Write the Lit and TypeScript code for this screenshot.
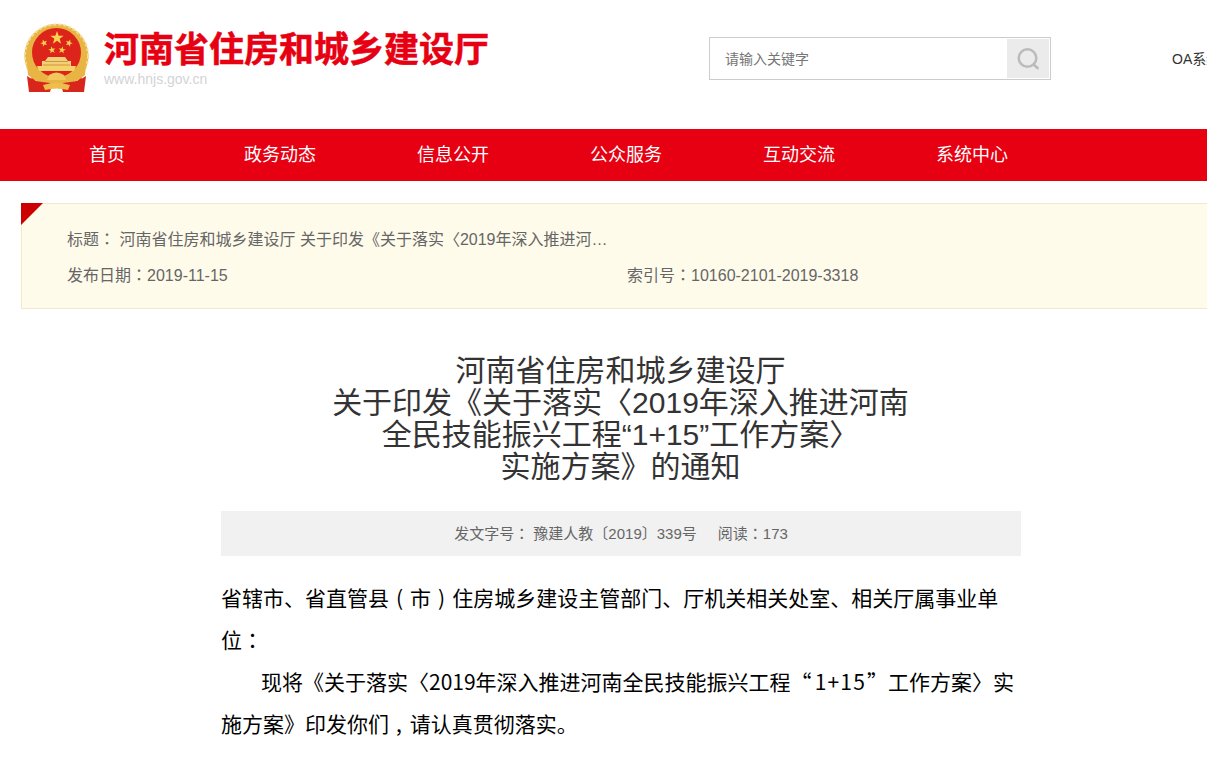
import { LitElement, html, css, svg } from "lit";
import { customElement } from "lit/decorators.js";

const NAV = ["首页", "政务动态", "信息公开", "公众服务", "互动交流", "系统中心"];

function star(cx: number, cy: number, r: number, rot = 0) {
  const pts: string[] = [];
  for (let i = 0; i < 10; i++) {
    const rad = i % 2 === 0 ? r : r * 0.4;
    const a = ((-90 + rot + i * 36) * Math.PI) / 180;
    pts.push(`${(cx + rad * Math.cos(a)).toFixed(2)},${(cy + rad * Math.sin(a)).toFixed(2)}`);
  }
  return svg`<polygon points=${pts.join(" ")} fill="#f7d34f" />`;
}

@customElement("app-root")
export class AppRoot extends LitElement {
  static styles = css`
    :host {
      display: block;
      width: 1207px;
      height: 765px;
      overflow: hidden;
      background: #fff;
      font-family: "Liberation Sans", "Noto Sans CJK SC", sans-serif;
      color: #333;
    }
    .tc { font-family: "Noto Sans CJK TC", sans-serif; }
    .paren { margin: 0 7px; }
    .comma { margin: 0 8px 0 7px; }
    .num { letter-spacing: 1.2px; margin: 0 1px 0 3px; }
    .top {
      height: 129px;
      display: flex;
      align-items: flex-start;
      width: 1260px;
    }
    .brand {
      width: 709px;
      padding: 23px 0 0 23px;
      box-sizing: border-box;
      display: flex;
      gap: 14px;
    }
    .emblem { width: 67px; height: 70px; flex: none; }
    .brand-text { padding-top: 5px; }
    .site {
      font-size: 35px;
      line-height: 43px;
      font-weight: 700;
      color: #e60012;
      white-space: nowrap;
      -webkit-text-stroke: 0.5px #e60012;
    }
    .url {
      font-size: 14px;
      line-height: 16px;
      color: #d3d3d6;
    }
    .search {
      margin-top: 37px;
      width: 342px;
      height: 43px;
      box-sizing: border-box;
      border: 1px solid #ccc;
      display: flex;
      align-items: center;
      padding: 1px;
    }
    .ph {
      flex: 1;
      padding: 0 0 2px 14px;
      font-size: 14px;
      color: #757575;
    }
    .btn {
      width: 42px;
      height: 39px;
      background: #ebebeb;
      display: flex;
      align-items: center;
      justify-content: center;
    }
    .oa {
      margin: 51px 0 0 121px;
      font-size: 14px;
      line-height: 16px;
      color: #333;
      white-space: nowrap;
    }
    nav {
      height: 52px;
      background: #e60012;
      display: flex;
      padding-left: 20.5px;
    }
    nav a {
      width: 173px;
      text-align: center;
      font-size: 18px;
      line-height: 52px;
      color: #fff;
    }
    .info {
      position: relative;
      margin: 22px 0 0 21px;
      width: 1300px;
      height: 106px;
      box-sizing: border-box;
      border: 1px solid #f3e9c8;
      background: #fffbeb;
      padding: 16px 0 0 45px;
      font-size: 16px;
      color: #666;
    }
    .corner {
      position: absolute;
      left: -1px;
      top: -1px;
      width: 0;
      height: 0;
      border-top: 22px solid #cc0000;
      border-right: 22px solid transparent;
    }
    .info-row { display: flex; line-height: 36px; height: 36px; white-space: nowrap; }
    .info-row .date { width: 560px; }
    .ttl { width: 545px; overflow: hidden; text-overflow: ellipsis; }
    .doc { width: 800px; margin: 0 0 0 221px; }
    h1 {
      margin: 46px 0 0;
      padding-right: 1px;
      font-size: 30px;
      line-height: 32px;
      font-weight: 400;
      color: #333;
      text-align: center;
    }
    .meta {
      margin-top: 28px;
      height: 45px;
      background: #f1f1f1;
      text-align: center;
      font-size: 15px;
      line-height: 43px;
      color: #666;
    }
    .read { margin-left: 21px; }
    .body {
      margin-top: 20px;
      font-family: "Noto Sans CJK SC", sans-serif;
      font-size: 21px;
      line-height: 42px;
      color: #000;
    }
    .body p { margin: 0; }
    .indent { text-indent: 40px; }
  `;

  render() {
    return html`
      <div class="top">
        <div class="brand">
          <svg class="emblem" viewBox="0 0 67 70" aria-hidden="true">
            <path d="M9 52 L6 68 L27 69 L30 58 Z M58 52 L61 68 L40 69 L37 58 Z" fill="#d9261c" />
            <circle cx="33.500" cy="33" r="32" fill="#e8b544" />
            <circle cx="33.500" cy="33" r="31.500" fill="none" stroke="#f5dc93" stroke-width="2" stroke-dasharray="3 2" />
            <circle cx="33.500" cy="29.500" r="24.500" fill="#dc241b" />
            ${star(34, 15, 7)} ${star(21, 20, 3.800, -20)} ${star(46, 20, 3.800, 20)}
            ${star(29, 27, 3.800, -10)} ${star(39, 27, 3.800, 10)}
            <path d="M25 34 h17 l3 4 h3 v5 h-29 v-5 h3 z" fill="#f2cf7a" />
            <path d="M22 38.500 h23 M20 42 h27" stroke="#c98a22" stroke-width="0.800" />
            <path d="M14 43 h39 l-2 5 h-35 z" fill="#f6d36a" />
            <path d="M4 41 Q13 55 33.500 57 Q54 55 63 41 L62 52 Q52 62 33.500 62 Q15 62 5 52 Z" fill="#e8b544" />
            <path d="M26 52 Q33.500 47 41 52 L43 57 L24 57 Z" fill="#f2c75b" />
            <path d="M4 53 L12 58 L27 60 L26 69 L6 69 Z M63 53 L55 58 L40 60 L41 69 L61 69 Z" fill="#d9261c" />
            <path d="M20 62 Q33.500 58 47 62 L45 67 Q33.500 64 22 67 Z" fill="#efbe4a" />
          </svg>
          <div class="brand-text">
            <div class="site">河南省住房和城乡建设厅</div>
            <div class="url">www.hnjs.gov.cn</div>
          </div>
        </div>
        <div class="search">
          <div class="ph">请输入关键字</div>
          <div class="btn">
            <svg width="24" height="24" viewBox="0 0 24 24" fill="none" stroke="#bbb" aria-hidden="true">
              <circle cx="11.500" cy="11" r="8.800" stroke-width="2.500" />
              <path d="M18 18 L21.500 21" stroke-width="2.800" stroke-linecap="round" />
            </svg>
          </div>
        </div>
        <div class="oa">OA系统</div>
      </div>
      <nav>${NAV.map((n) => html`<a>${n}</a>`)}</nav>
      <section class="info">
        <div class="corner"></div>
        <div class="info-row">
          <span class="ttl">标题<span class="tc">：</span> 河南省住房和城乡建设厅 关于印发《关于落实〈2019年深入推进河南全民技能振兴工程“1+15”工作方案〉实施方案》的通知</span>
        </div>
        <div class="info-row">
          <span class="date">发布日期<span class="tc">：</span>2019-11-15</span><span>索引号<span class="tc">：</span>10160-2101-2019-3318</span>
        </div>
      </section>
      <article class="doc">
        <h1>河南省住房和城乡建设厅<br />关于印发《关于落实〈2019年深入推进河南<br />全民技能振兴工程“1+15”工作方案〉<br />实施方案》的通知</h1>
        <div class="meta">发文字号<span class="tc">：</span> 豫建人教〔2019〕339号<span class="read">阅读<span class="tc">：</span>173</span></div>
        <div class="body">
          <p>省辖市、省直管县<span class="paren">(</span>市<span class="paren">)</span>住房城乡建设主管部门、厅机关相关处室、相关厅属事业单位<span class="tc">：</span></p>
          <p class="indent">现将《关于落实〈2019年深入推进河南全民技能振兴工程“<span class="num">1+15</span>”工作方案〉实施方案》印发你们<span class="comma">,</span>请认真贯彻落实。</p>
        </div>
      </article>
    `;
  }
}
